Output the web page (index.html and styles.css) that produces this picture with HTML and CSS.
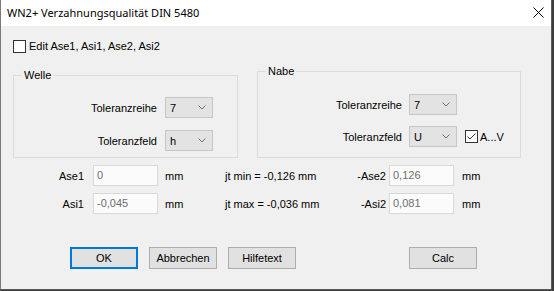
FILE: index.html
```html
<!DOCTYPE html>
<html lang="de">
<head>
<meta charset="utf-8">
<title>WN2+ Verzahnungsqualität DIN 5480</title>
<link rel="stylesheet" href="styles.css">
</head>
<body>
<div class="window">
  <div class="titlebar">
    <span class="title">WN2+ Verzahnungsqualität DIN 5480</span>
    <svg class="close" width="11" height="11" viewBox="0 0 11 11"><path d="M0.5 0.5 L10.5 10.5 M10.5 0.5 L0.5 10.5" stroke="#000" stroke-width="1" fill="none"/></svg>
  </div>
  <div class="content">
    <label class="check-row">
      <span class="box"></span>
      <span>Edit Ase1, Asi1, Ase2, Asi2</span>
    </label>

    <div class="groups">
      <div class="group group-welle">
        <div class="group-title">Welle</div>
        <div class="group-grid grid-welle">
          <span class="lbl">Toleranzreihe</span>
          <div class="select"><span>7</span><svg width="8" height="5" viewBox="0 0 8 5"><path d="M0.5 0.5 L4 4 L7.5 0.5" stroke="#707070" fill="none"/></svg></div>
          <span></span>
          <span class="lbl">Toleranzfeld</span>
          <div class="select"><span>h</span><svg width="8" height="5" viewBox="0 0 8 5"><path d="M0.5 0.5 L4 4 L7.5 0.5" stroke="#707070" fill="none"/></svg></div>
          <span></span>
        </div>
      </div>

      <div class="group group-nabe">
        <div class="group-title">Nabe</div>
        <div class="group-grid grid-nabe">
          <span class="lbl">Toleranzreihe</span>
          <div class="select"><span>7</span><svg width="8" height="5" viewBox="0 0 8 5"><path d="M0.5 0.5 L4 4 L7.5 0.5" stroke="#707070" fill="none"/></svg></div>
          <span></span>
          <span class="lbl">Toleranzfeld</span>
          <div class="select"><span>U</span><svg width="8" height="5" viewBox="0 0 8 5"><path d="M0.5 0.5 L4 4 L7.5 0.5" stroke="#707070" fill="none"/></svg></div>
          <label class="av">
            <svg width="13" height="13" viewBox="0 0 13 13"><rect x="0.5" y="0.5" width="12" height="12" fill="#fff" stroke="#333"/><path d="M2.5 6.5 L5 9 L10.5 3.5" stroke="#333" stroke-width="1" fill="none"/></svg>
            <span>A...V</span>
          </label>
        </div>
      </div>
    </div>

    <div class="fields">
      <span class="lbl">Ase1</span>
      <div class="input">0</div>
      <span class="unit">mm</span>
      <span class="jt">jt min = -0,126 mm</span>
      <span class="lbl">-Ase2</span>
      <div class="input">0,126</div>
      <span class="unit2">mm</span>

      <span class="lbl">Asi1</span>
      <div class="input">-0,045</div>
      <span class="unit">mm</span>
      <span class="jt">jt max = -0,036 mm</span>
      <span class="lbl">-Asi2</span>
      <div class="input">0,081</div>
      <span class="unit2">mm</span>
    </div>

    <div class="buttons">
      <button class="btn btn-default">OK</button>
      <button class="btn">Abbrechen</button>
      <button class="btn">Hilfetext</button>
      <button class="btn btn-calc">Calc</button>
    </div>
  </div>
</div>
</body>
</html>
```
FILE: styles.css
```css
html, body {
  margin: 0;
  padding: 0;
  background: #3c3c3c;
}
body {
  width: 554px;
  height: 291px;
  overflow: hidden;
  font-family: "Liberation Sans", Arial, sans-serif;
  font-size: 11px;
  color: #000;
}
.window {
  box-sizing: border-box;
  width: 552px;
  height: 290px;
  background: #f0f0f0;
  border-left: 1px solid #7a7a7a;
  border-right: 1px solid #5a5a5a;
  border-bottom: 1px solid #5a5a5a;
}
.titlebar {
  height: 26px;
  background: #fff;
  display: flex;
  align-items: center;
  justify-content: space-between;
  padding: 0 7px 0 6px;
}
.title {
  font-family: "Noto Sans", "Open Sans", sans-serif;
  font-size: 11px;
  line-height: 16px;
  margin-top: -1px;
}
.close {
  display: block;
  margin-top: -1px;
}
.content {
  padding-left: 12px;
}
.check-row {
  display: flex;
  align-items: center;
  gap: 3px;
  margin-top: 14px;
  height: 13px;
  line-height: 13px;
}
.box {
  box-sizing: border-box;
  width: 13px;
  height: 13px;
  border: 1px solid #333;
  background: #fff;
}
.groups {
  display: flex;
  align-items: flex-end;
  gap: 19px;
  margin-top: 18px;
}
.group {
  border: 1px solid #dcdcdc;
}
.group-welle {
  width: 225px;
  box-sizing: border-box;
  padding-bottom: 6px;
}
.group-nabe {
  width: 264px;
  box-sizing: border-box;
  padding-bottom: 10px;
}
.group-title {
  width: fit-content;
  margin: -7px 0 0 8px;
  padding: 0 2px;
  line-height: 13px;
  background: #f0f0f0;
}
.group-grid {
  display: grid;
  align-items: center;
}
.grid-welle {
  grid-template-columns: 143px 48px auto;
  grid-template-rows: 21px 21px;
  column-gap: 8px;
  row-gap: 12px;
  margin-top: 15px;
}
.grid-nabe {
  grid-template-columns: 144px 48px auto;
  grid-template-rows: 21px 21px;
  column-gap: 7px;
  row-gap: 11px;
  margin-top: 16px;
}
.lbl {
  text-align: right;
  white-space: nowrap;
}
.select {
  box-sizing: border-box;
  height: 21px;
  width: 48px;
  background: #e3e3e3;
  border: 1px solid #c6c6c6;
  display: flex;
  align-items: center;
  justify-content: space-between;
  padding: 0 6px 0 4px;
}
.select svg {
  display: block;
}
.av {
  display: flex;
  align-items: center;
  gap: 2px;
  margin-left: 1px;
}
.av svg {
  display: block;
}
.fields {
  display: grid;
  grid-template-columns: 71px 74px 67px 105px 56px 68px auto;
  grid-template-rows: 21px 21px;
  row-gap: 7px;
  align-items: center;
  margin-top: 7px;
}
.input {
  box-sizing: border-box;
  justify-self: end;
  width: 65px;
  height: 21px;
  background: #fbfbfb;
  border: 1px solid #d9d9d9;
  color: #6d6d6d;
  padding-left: 3px;
  line-height: 18px;
}
.unit {
  padding-left: 7px;
}
.unit2 {
  padding-left: 8px;
}
.jt {
  white-space: nowrap;
}
.buttons {
  display: flex;
  gap: 11px;
  margin-top: 33px;
  padding-left: 57px;
}
.btn {
  box-sizing: border-box;
  width: 68px;
  height: 22px;
  margin: 0;
  padding: 0;
  background: #e1e1e1;
  border: 1px solid #adadad;
  font-family: "Liberation Sans", Arial, sans-serif;
  font-size: 11px;
  color: #000;
}
.btn-default {
  border: 2px solid #0078d7;
}
.btn-calc {
  margin-left: 102px;
}
```
